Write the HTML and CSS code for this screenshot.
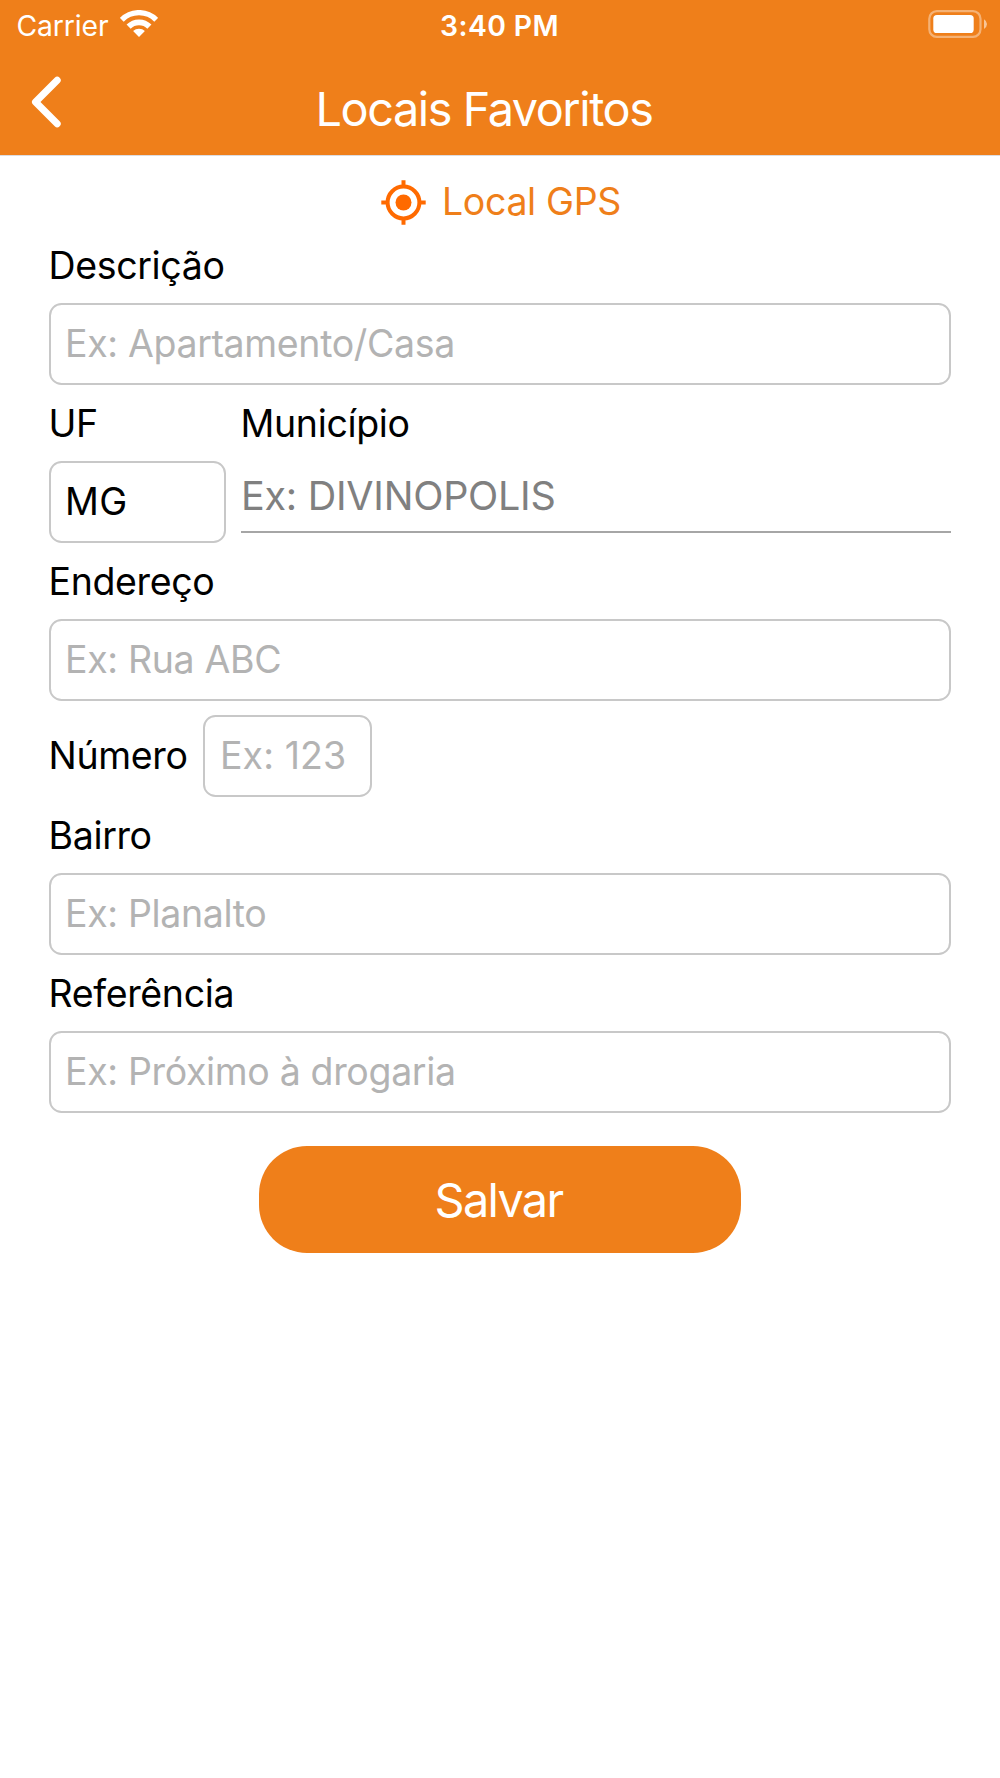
FILE: index.html
```html
<!DOCTYPE html>
<html lang="pt-BR">
<head>
<meta charset="utf-8">
<title>Locais Favoritos</title>
<link rel="stylesheet" href="styles.css">
</head>
<body>
<header class="header">
  <div class="status">
    <div class="status-left">
      <span class="carrier">Carrier</span>
      <svg class="wifi" width="38" height="28" viewBox="0 0 38 28" fill="none" stroke="#fff">
        <path d="M1.8 9.8A24.3 24.3 0 0 1 36.2 9.8" stroke-width="5.4"/>
        <path d="M8.6 16.6A14.7 14.7 0 0 1 29.4 16.6" stroke-width="5.8"/>
        <path d="M19 27L13.1 21.1A8.3 8.3 0 0 1 24.9 21.1Z" fill="#fff" stroke="none"/>
      </svg>
    </div>
    <span class="time">3:40 PM</span>
    <svg class="battery" width="60" height="28" viewBox="0 0 60 28">
      <rect x="1.3" y="1.2" width="51.2" height="25.6" rx="7.5" fill="none" stroke="#fff" stroke-opacity=".4" stroke-width="2.2"/>
      <rect x="5.3" y="5" width="40.4" height="18" rx="3.6" fill="#fff"/>
      <path d="M56 9.2Q59 11 59 14T56 19Z" fill="#fff" fill-opacity=".55"/>
    </svg>
  </div>
  <nav class="nav">
    <svg class="back" width="31" height="52" viewBox="0 0 31 52" fill="none" stroke="#fff" stroke-width="7" stroke-linecap="round" stroke-linejoin="round">
      <path d="M26.2 4.2L4.5 26L26.2 47.8"/>
    </svg>
    <h1 class="title">Locais Favoritos</h1>
  </nav>
</header>
<main class="form">
  <div class="gps">
    <svg width="45" height="45" viewBox="0 0 45 45" fill="none" stroke="#ff6a00" stroke-width="4">
      <circle cx="22.5" cy="22.5" r="15.9"/>
      <path d="M22.5 0.3V6M22.5 39V44.7M0.3 22.5H6M39 22.5H44.7"/>
      <circle cx="22.5" cy="22.5" r="8" fill="#ff6a00" stroke="none"/>
    </svg>
    <span class="gps-text">Local GPS</span>
  </div>
  <div class="field">
    <label class="label">Descrição</label>
    <div class="box placeholder">Ex: Apartamento/Casa</div>
  </div>
  <div class="columns">
    <div class="field">
      <label class="label">UF</label>
      <div class="box value">MG</div>
    </div>
    <div class="field">
      <label class="label">Município</label>
      <div class="underlined">Ex: DIVINOPOLIS</div>
    </div>
  </div>
  <div class="field">
    <label class="label">Endereço</label>
    <div class="box placeholder">Ex: Rua ABC</div>
  </div>
  <div class="number-row">
    <label class="number-label">Número</label>
    <div class="box placeholder number">Ex: 123</div>
  </div>
  <div class="field">
    <label class="label">Bairro</label>
    <div class="box placeholder">Ex: Planalto</div>
  </div>
  <div class="field">
    <label class="label">Referência</label>
    <div class="box placeholder">Ex: Próximo à drogaria</div>
  </div>
  <button class="save" type="button">Salvar</button>
</main>
</body>
</html>
```
FILE: styles.css
```css
* { box-sizing: border-box; }

body {
  margin: 0;
  background: #fff;
  color: #000;
  font-family: Inter, "Liberation Sans", sans-serif;
  font-size: 37.5px;
  letter-spacing: -0.35px;
}

.header {
  height: 156px;
  background: #ef7f1a;
  color: #fff;
  border-bottom: 1px solid #dcdce0;
}

.status {
  display: grid;
  grid-template-columns: 1fr auto 1fr;
  height: 50px;
  padding: 0 12.5px 0 16.5px;
  font-size: 28.3px;
  line-height: 52px;
}

.status-left { display: flex; gap: 11px; letter-spacing: -0.1px; }
.wifi { margin-top: 10px; }
.time { font-weight: 600; letter-spacing: 0.4px; margin-left: -5px; }
.battery { justify-self: end; margin-top: 10.3px; }

.nav {
  display: flex;
  align-items: flex-start;
  padding: 26px 93.5px 0 30.5px;
}

.title {
  flex: 1;
  margin: 5px 0 0;
  font-size: 46.8px;
  font-weight: 400;
  line-height: 56px;
  letter-spacing: -1.45px;
  text-align: center;
}

.form {
  display: flex;
  flex-direction: column;
  padding: 0 49px;
}

.gps {
  display: flex;
  justify-content: center;
  gap: 16px;
  height: 71.3px;
  padding: 24.4px 0 0 2px;
  color: #ef7f1a;
}

.gps svg { flex: none; }
.gps-text { line-height: 44px; }

.field { display: flex; flex-direction: column; }

.label {
  height: 75.8px;
  line-height: 77.4px;
  margin-left: -0.5px;
}

.columns { display: grid; grid-template-columns: 177px 1fr; gap: 15px; }

.box {
  height: 82px;
  padding: 0 14.5px 0 14px;
  border: 2px solid #c8c8c8;
  border-radius: 12.5px;
  line-height: 78px;
  white-space: nowrap;
}

.placeholder { color: #b3b3b3; }
.value { letter-spacing: 0.3px; }

.underlined {
  height: 72.5px;
  border-bottom: 2px solid #a6a6a6;
  color: #808080;
  font-size: 39.5px;
  line-height: 71.5px;
  letter-spacing: -0.26px;
}

.number-row {
  display: flex;
  align-items: center;
  gap: 14.4px;
  padding-top: 14.4px;
}

.number-label { width: 140.1px; margin-left: -0.5px; line-height: 80px; }
.number { width: 169px; padding-left: 15px; letter-spacing: 0.1px; }

.save {
  align-self: center;
  width: 482.5px;
  height: 106.7px;
  margin-top: 33.7px;
  padding: 0 3px 0 0;
  border: 0;
  border-radius: 48px;
  background: #ef7f1a;
  color: #fff;
  font: 400 46.8px/108px Inter, "Liberation Sans", sans-serif;
  letter-spacing: -1.65px;
}
```
